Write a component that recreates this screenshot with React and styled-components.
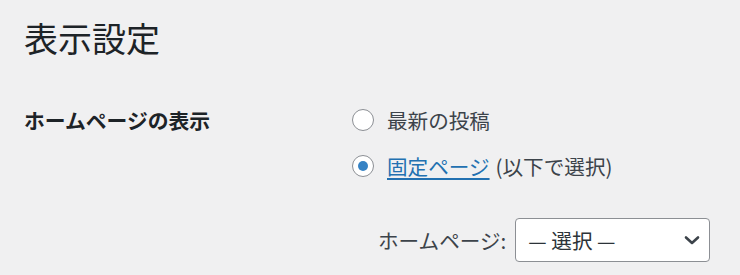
import React from "react";
import styled, { createGlobalStyle } from "styled-components";

const GlobalStyle = createGlobalStyle`
  html, body {
    margin: 0;
    padding: 0;
    background: #f0f0f1;
  }
  body {
    font-family: "Noto Sans CJK JP", "Noto Sans", sans-serif;
    color: #1d2327;
  }
`;

// Page wrapper
const Page = styled.div`
  padding: 16px 24px 0 24px;
  width: 740px;
  height: 275px;
  box-sizing: border-box;
  overflow: hidden;
`;

const Heading = styled.h1`
  margin: 0;
  font-size: 34px;
  font-weight: 400;
  line-height: 44px;
  color: #1d2327;
`;

// Two column settings table
const FormTable = styled.div`
  margin-top: 37px;
  display: grid;
  grid-template-columns: 328px 1fr;
`;

const RowLabel = styled.div`
  font-size: 20.8px;
  font-weight: 700;
  line-height: 46px;
  color: #1d2327;
`;

const Options = styled.div`
  display: flex;
  flex-direction: column;
`;

const RadioRow = styled.label`
  display: flex;
  align-items: center;
  height: 46px;
  font-size: 20.6px;
  color: #3c434a;
`;

const Radio = styled.span`
  width: 22px;
  height: 22px;
  box-sizing: border-box;
  border: 1px solid #8c8f94;
  border-radius: 50%;
  background: #fff;
  margin-right: 13px;
  display: flex;
  align-items: center;
  justify-content: center;
  flex-shrink: 0;

  &::after {
    content: "";
    display: ${({ checked }) => (checked ? "block" : "none")};
    width: 10px;
    height: 10px;
    border-radius: 50%;
    background: #3582c4;
  }
`;

const Link = styled.a`
  color: #2271b1;
  text-decoration: underline;
  text-underline-offset: 3px;
  margin-right: 6px;
`;

const SelectRow = styled.div`
  margin-top: 29px;
  margin-left: 26px;
  display: flex;
  align-items: center;
  gap: 9px;
  font-size: 20.6px;
  color: #3c434a;
`;

const SelectBox = styled.div`
  width: 195px;
  height: 44px;
  box-sizing: border-box;
  border: 1px solid #8c8f94;
  border-radius: 4px;
  background: #fff;
  display: flex;
  align-items: center;
  justify-content: space-between;
  padding: 0 7px 0 12px;
  color: #2c3338;
`;

const Chevron = () => (
  <svg width="20" height="20" viewBox="0 0 20 20">
    <path
      d="M4 7.5l6 5.5 6-5.5"
      fill="none"
      stroke="#3c434a"
      strokeWidth="2.6"
      strokeLinecap="round"
      strokeLinejoin="round"
    />
  </svg>
);

const App = () => (
  <Page>
    <GlobalStyle />
    <Heading>表示設定</Heading>
    <FormTable>
      <RowLabel>ホームページの表示</RowLabel>
      <Options>
        <RadioRow>
          <Radio />
          最新の投稿
        </RadioRow>
        <RadioRow>
          <Radio checked />
          <Link href="#">固定ページ</Link>(以下で選択)
        </RadioRow>
        <SelectRow>
          ホームページ:
          <SelectBox>
            <span>— 選択 —</span>
            <Chevron />
          </SelectBox>
        </SelectRow>
      </Options>
    </FormTable>
  </Page>
);

export default App;
